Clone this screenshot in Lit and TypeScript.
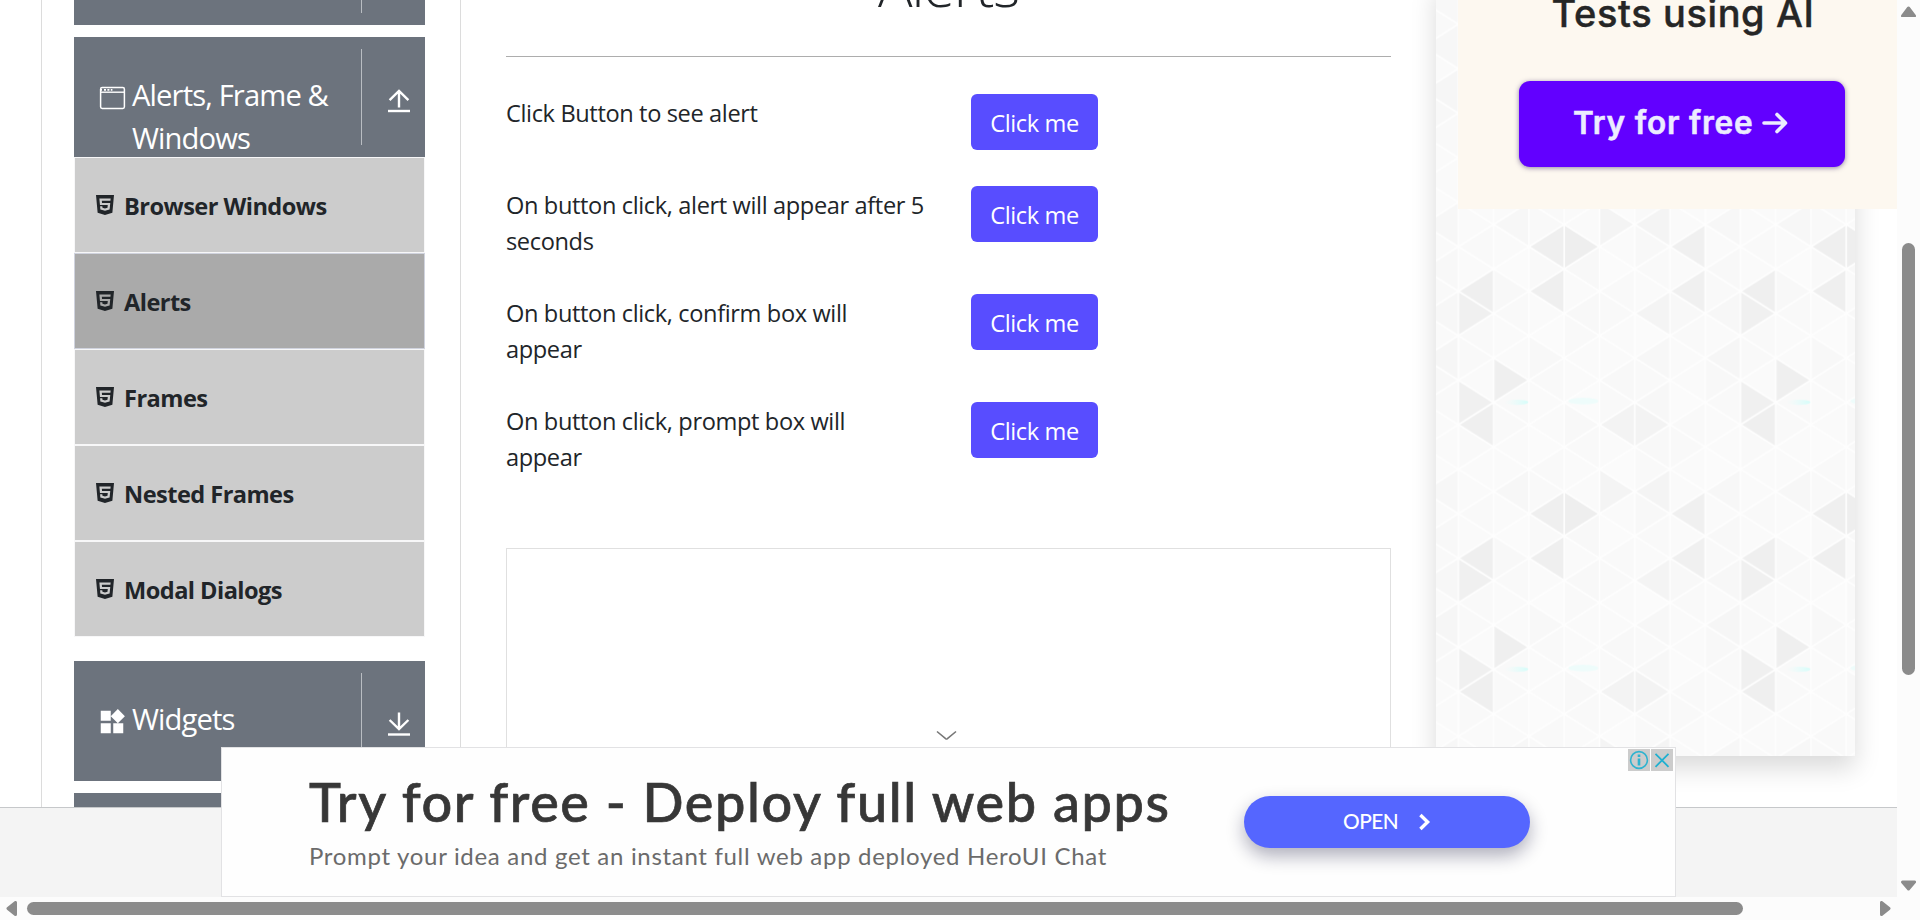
import { LitElement, html, css, svg } from "lit";
import { customElement, property } from "lit/decorators.js";
import { classMap } from "lit/directives/class-map.js";

const html5Icon = svg`<svg class="html5" width="18" height="20" viewBox="0 32 384 448" preserveAspectRatio="none" fill="currentColor">
  <path d="M0 32l34.9 395.8L191.5 480l157.6-52.2L384 32H0zm308.2 127.9H124.4l4.1 49.4h175.6l-13.6 148.4-97.9 27v.3h-1.1l-98.7-27.3-6-75.8h47.7L138 320l53.5 14.5 53.7-14.5 6-62.2H84.3L71.5 112.2h241.1l-4.4 47.7z"/>
</svg>`;

const windowIcon = svg`<svg width="30" height="30" viewBox="0 0 30 30">
  <rect x="3.6" y="4.6" width="23.8" height="20.8" rx="1.6" fill="none" stroke="#fff" stroke-width="1.5"/>
  <path d="M3.6 9.2H27.4" stroke="#fff" stroke-width="1.4"/>
  <path d="M4 6.9h1M7 6.9h2M10.4 6.9h2M13.8 6.9h1.6" stroke="#fff" stroke-width="1.7"/>
</svg>`;

const widgetsIcon = svg`<svg width="30" height="30" viewBox="0 0 24 24" fill="#fff">
  <path d="M13 13v8h8v-8h-8zM3 21h8v-8H3v8zM3 3v8h8V3H3zm13.66-1.31L11 7.34 16.66 13l5.66-5.66-5.66-5.65z"/>
</svg>`;

const upIcon = svg`<svg width="24" height="26" viewBox="0 0 24 26" fill="none" stroke="#fff" stroke-width="2.4">
  <path d="M12 19.5V3.2M2.6 12.2L12 3L21.4 12.2"/><path d="M1 23H23" stroke-width="2.4"/>
</svg>`;
const downIcon = svg`<svg width="24" height="26" viewBox="0 0 24 26" fill="none" stroke="#fff" stroke-width="2.4">
  <path d="M12 1.5V17.8M2.6 9L12 18L21.4 9"/><path d="M1 23.5H23" stroke-width="2.4"/>
</svg>`;

@customElement("side-group")
export class SideGroup extends LitElement {
  static styles = css`
    :host { display: block; }
    .head { display: flex; height: 120px; background: #6c737d; color: #fff; overflow: hidden; }
    .label { display: flex; width: 287px; box-sizing: border-box; padding: 37px 0 0 23px; }
    .icon { width: 35px; height: 30px; padding-top: 9px; }
    .icon svg { display: block; }
    .text { font-size: 29.2px; line-height: 43px; letter-spacing: -0.87px; width: 222px; }
    .toggle { display: flex; align-items: center; padding: 6px 0 0 25px; margin: 12px 0; box-sizing: border-box; border-left: 1px solid #b9bdc2; flex: 1; }
    .toggle.up { padding-top: 8px; }
    .item { display: flex; box-sizing: border-box; height: 96px; border: 1px solid #f7f7f8; background: #ccc; color: #212529;
      padding: 30px 0 0 21px; font-weight: 700; font-size: 23.6px; line-height: 36px; letter-spacing: -0.55px; }
    .item.active { background: #aaa; border-color: #d0d3de; }
    .html5 { margin: 7px 10px 0 0; }
    .item span { white-space: nowrap; }
  `;
  @property() label = "";
  @property() icon = "";
  @property({ type: Boolean }) open = false;
  @property({ attribute: false }) items: string[] = [];
  render() {
    return html`
      <div class="head">
        <div class="label">
          <div class="icon">${this.icon === "window" ? windowIcon : this.icon === "widgets" ? widgetsIcon : ""}</div>
          <div class="text">${this.label}</div>
        </div>
        <div class=${classMap({ toggle: true, up: this.open })}>${this.label ? (this.open ? upIcon : downIcon) : ""}</div>
      </div>
      ${this.items.map((t) => html`<div class=${classMap({ item: true, active: t === "Alerts" })}>${html5Icon}<span>${t}</span></div>`)}
    `;
  }
}

/* Tile geometry of the triangle backdrop: 8 columns by 12 half rows. */
const COL = 35.26;
const ROW = 22.25;
const SHADES: Record<string, string> = {
  "L2,0": "#efefef", "R3,0": "#eeeeee", "L6,0": "#f0f0f0", "L0,2": "#efefef", "L2,2": "#efefef", "L6,2": "#f0f0f0",
  "R0,3": "#f0f0f0", "L5,3": "#f4f4f4", "R1,6": "#efefef", "R0,7": "#f0f0f0", "L0,8": "#efefef", "L4,8": "#f3f3f3",
  "R5,8": "#f3f3f3", "R4,11": "#f4f4f4", "L5,11": "#f4f4f4", "L5,5": "#f7f7f7", "L7,5": "#f6f6f6", "L7,3": "#f7f7f7",
  "L5,7": "#f7f7f7", "L1,11": "#f7f7f7", "L3,1": "#f8f8f8", "L7,11": "#f7f7f7",
};
const LIGHT = ["#fafafa", "#f9f9f9", "#fbfbfb", "#fafafa", "#f8f8f8", "#fafafa", "#f9f9f9"];

@customElement("triangle-panel")
export class TrianglePanel extends LitElement {
  static styles = css`
    :host { display: block; }
    svg { display: block; }
  `;
  render() {
    const tris = [];
    for (let j = 0; j < 8; j++) {
      for (let r = -1; r <= 13; r++) {
        const y = r * ROW;
        const left = (r - j) % 2 === 0;
        const rr = (r + 12) % 12;
        const tip = left ? j * COL + 1.8 : (j + 1) * COL - 1.8;
        const base = left ? (j + 1) * COL - 0.8 : j * COL + 0.8;
        const fill = SHADES[(left ? "L" : "R") + j + "," + rr] ?? LIGHT[(j * 5 + rr * 3 + (left ? 1 : 0)) % 7];
        tris.push(svg`<path d="M${tip} ${y}L${base} ${y - ROW + 1.6}V${y + ROW - 1.6}Z" fill=${fill}/>`);
      }
    }
    return html`<svg width="419" height="776" viewBox="0 0 419 776">
      <defs>
        <linearGradient id="c"><stop offset="0" stop-color="#e4fdfb" stop-opacity="0"/><stop offset="1" stop-color="#d4fdfa"/></linearGradient>
        <pattern id="p" width=${COL * 8} height=${ROW * 12} patternUnits="userSpaceOnUse" x="22.4" y="266.7">
          <rect width="300" height="300" fill="#fefefe"/>
          ${tris}
          <ellipse cx="58" cy="155.6" rx="12" ry="2.6" fill="url(#c)"/>
          <ellipse cx="125" cy="154.4" rx="15" ry="3.4" fill="#ebfcfb" opacity=".8"/>
        </pattern>
      </defs>
      <rect width="419" height="776" fill="url(#p)"/>
    </svg>`;
  }
}

@customElement("app-root")
export class AppRoot extends LitElement {
  static styles = css`
    :host { display: block; width: 1920px; height: 920px; overflow: hidden; background: #fff; color: #212529;
      font-family: "Open Sans", "Noto Sans", sans-serif; }
    .window { display: grid; grid-template: 897px 23px / 1897px 23px; position: relative; }
    .view { overflow: hidden; display: flex; flex-direction: column; }
    .main { height: 807px; overflow: hidden; display: flex; padding-left: 41px; }
    .footer { flex: 1; background: #f4f4f4; border-top: 1px solid #c6c8ca; }
    .sidebar { width: 351px; border-left: 1px solid #dcdcdc; padding: 0 35px 0 32px; }
    .groups { display: flex; flex-direction: column; margin-top: -95px; }
    .groups side-group { margin-bottom: 12px; }
    .groups side-group.expanded { margin-bottom: 24px; }
    .content { width: 885px; border-left: 1px solid #dcdcdc; padding: 0 45px; }
    h1 { margin: -51px 0 34px; font-size: 57.5px; font-weight: 300; line-height: 72px; letter-spacing: -1.1px; text-align: center; height: 73px; }
    .rule { height: 1px; background: #adadad; margin-bottom: 37px; }
    .row { display: flex; align-items: flex-start; font-size: 23.6px; line-height: 36px; letter-spacing: -0.37px; min-height: 92px; }
    .row.two { min-height: 108px; }
    .desc { width: 419px; padding: 1px 46px 0 0; box-sizing: content-box; }
    .btn { font: inherit; letter-spacing: -0.4px; color: #fff; background: #584dff; border: 0; border-radius: 6px; width: 127px; height: 56px; padding: 1px 0 0; }
    .frame { margin-top: 38px; border: 1px solid #e0e0e0; height: 400px; }
    .aside { width: 461px; }
    .panel { margin: -20px 0 0; width: 419px; height: 776px; box-shadow: 0 12px 24px rgba(0,0,0,.15); }
    .promo { position: absolute; left: 1458px; top: 0; width: 439px; height: 209px; background: #fdf8f0; overflow: hidden;
      font-family: Inter, sans-serif; text-align: center; display: flex; flex-direction: column; align-items: center; }
    .promo-title { font-size: 38px; font-weight: 500; line-height: 46px; letter-spacing: 0.6px; margin-top: -10px; padding-left: 11px; white-space: nowrap; color: #262626; -webkit-text-stroke: 0.4px #262626; }
    .promo-btn { display: flex; align-items: center; box-sizing: border-box; width: 326px; height: 86px; margin: 45px 0 0 9px; padding: 0 0 4px 54px; border-radius: 11px; background: #6200ff; color: #ececff;
      font-size: 31.6px; font-weight: 600; letter-spacing: 0.75px; -webkit-text-stroke: 0.5px #ececff; box-shadow: 0 1px 5px rgba(40,20,90,.5); white-space: nowrap; }
    .promo-btn svg { margin: 2px 0 0 9px; }
    .ad { position: absolute; left: 221px; top: 747px; width: 1453px; height: 148px; border: 1px solid #e2e2e4; background: #fefefe; display: flex;
      font-family: Lato, sans-serif; }
    .ad-text { width: 934px; padding: 22px 0 0 88px; white-space: nowrap; }
    .ad-title { font-size: 54px; font-weight: 500; line-height: 64px; letter-spacing: 1.58px; color: #373737; -webkit-text-stroke: 0.7px #373737; margin-left: -1px; }
    .ad-sub { margin-top: 6px; font-size: 24px; line-height: 32px; letter-spacing: 0.69px; color: #6b6b6b; margin-left: -1px; }
    .open { margin-top: 48px; display: flex; align-items: center; box-sizing: border-box; padding: 0 0 4px 99px; width: 286px; height: 52px; border-radius: 26px; background: #5566ff; color: #fff;
      font-size: 20.8px; font-weight: 500; letter-spacing: -0.5px; box-shadow: 0 8px 18px rgba(10,10,50,.32); }
    .open svg { margin: 4px 0 0 20px; }
    .choices { display: flex; gap: 1px; margin: 1px 0 0 98px; }
    .choice { width: 22px; height: 22px; background: #ccc; }
    .choice svg { display: block; }
    .chev { position: absolute; left: 936px; top: 729px; }
    .vbar, .hbar { background: #fcfcfc; display: flex; align-items: center; }
    .vbar { flex-direction: column; }
    .vthumb { width: 13px; height: 432px; margin: 226px 0 205px; border-radius: 7px; background: #8b8b8b; }
    .vbar svg:first-child { margin: 6px 0 0 0; }
    .hbar svg:first-child { margin-left: 6px; }
    .hthumb { height: 13px; width: 1716px; margin: 0 137px 0 10px; border-radius: 7px; background: #8b8b8b; }
    .corner { background: #fcfcfc; }
    .vbar svg, .hbar svg { flex: none; display: block; }
    .hbar { padding-bottom: 1px; box-sizing: border-box; }
  `;
  rows = [
    "Click Button to see alert",
    "On button click, alert will appear after 5 seconds",
    "On button click, confirm box will appear",
    "On button click, prompt box will appear",
  ];
  arrow(points: string, w: number, h: number) {
    return html`<svg width=${w} height=${h} viewBox="0 0 ${w} ${h}"><polygon points=${points} fill="#8b8b8b" stroke="#8b8b8b" stroke-width="3" stroke-linejoin="round"/></svg>`;
  }
  render() {
    return html`<div class="window">
      <div class="view">
        <div class="main">
          <div class="sidebar"><div class="groups">
            <side-group></side-group>
            <side-group class="expanded" open label="Alerts, Frame & Windows" icon="window"
              .items=${["Browser Windows", "Alerts", "Frames", "Nested Frames", "Modal Dialogs"]}></side-group>
            <side-group label="Widgets" icon="widgets"></side-group>
            <side-group></side-group>
          </div></div>
          <div class="content">
            <h1>Alerts</h1>
            <div class="rule"></div>
            ${this.rows.map((t, i) => html`<div class=${classMap({ row: true, two: i > 0 })}><div class="desc">${t}</div><button class="btn">Click me</button></div>`)}
            <div class="frame"></div>
          </div>
          <div class="aside"><div class="panel"><triangle-panel></triangle-panel></div></div>
        </div>
        <div class="footer"></div>
      </div>
      <div class="vbar">
        ${this.arrow("7.5,2 13.5,10 1.5,10", 15, 11)}
        <div class="vthumb"></div>
        ${this.arrow("7.5,9 13.5,2 1.5,2", 15, 11)}
      </div>
      <div class="hbar">
        ${this.arrow("2,7.5 9.5,1.5 9.5,13.5", 11, 15)}
        <div class="hthumb"></div>
        ${this.arrow("9,7.5 1.5,1.5 1.5,13.5", 11, 15)}
      </div>
      <div class="corner"></div>

      <div class="promo">
        <div class="promo-title">Tests using AI</div>
        <div class="promo-btn">Try for free
          <svg width="26" height="24" viewBox="0 0 26 24" fill="none" stroke="#ececff" stroke-width="3.6" stroke-linecap="round" stroke-linejoin="round"><path d="M2 12H23M15 3.5L23.5 12L15 20.5"/></svg>
        </div>
      </div>

      <svg class="chev" width="22" height="14" viewBox="0 0 22 14" fill="none" stroke="#777" stroke-width="1.6"><path d="M1 2.5L9.6 9.7Q10.5 10.4 11.4 9.7L20 2.5"/></svg>

      <div class="ad">
        <div class="ad-text">
          <div class="ad-title">Try for free - Deploy full web apps</div>
          <div class="ad-sub">Prompt your idea and get an instant full web app deployed HeroUI Chat</div>
        </div>
        <div class="open">OPEN
          <svg width="14" height="18" viewBox="0 0 14 18" fill="none" stroke="#fff" stroke-width="3.4"><path d="M2.4 2L9.6 9L2.4 16"/></svg>
        </div>
        <div class="choices">
          <div class="choice"><svg width="22" height="22" viewBox="0 0 22 22"><circle cx="11" cy="11" r="8.4" fill="none" stroke="#2fb3cf" stroke-width="1.6"/><path d="M11 5.6v2.4M11 9.4v7" stroke="#2fb3cf" stroke-width="2.6"/></svg></div>
          <div class="choice"><svg width="22" height="22" viewBox="0 0 22 22"><path d="M4.5 4.8L17.5 17.8M17.5 4.8L4.5 17.8" stroke="#1fb0d0" stroke-width="1.8"/></svg></div>
        </div>
      </div>
    </div>`;
  }
}
